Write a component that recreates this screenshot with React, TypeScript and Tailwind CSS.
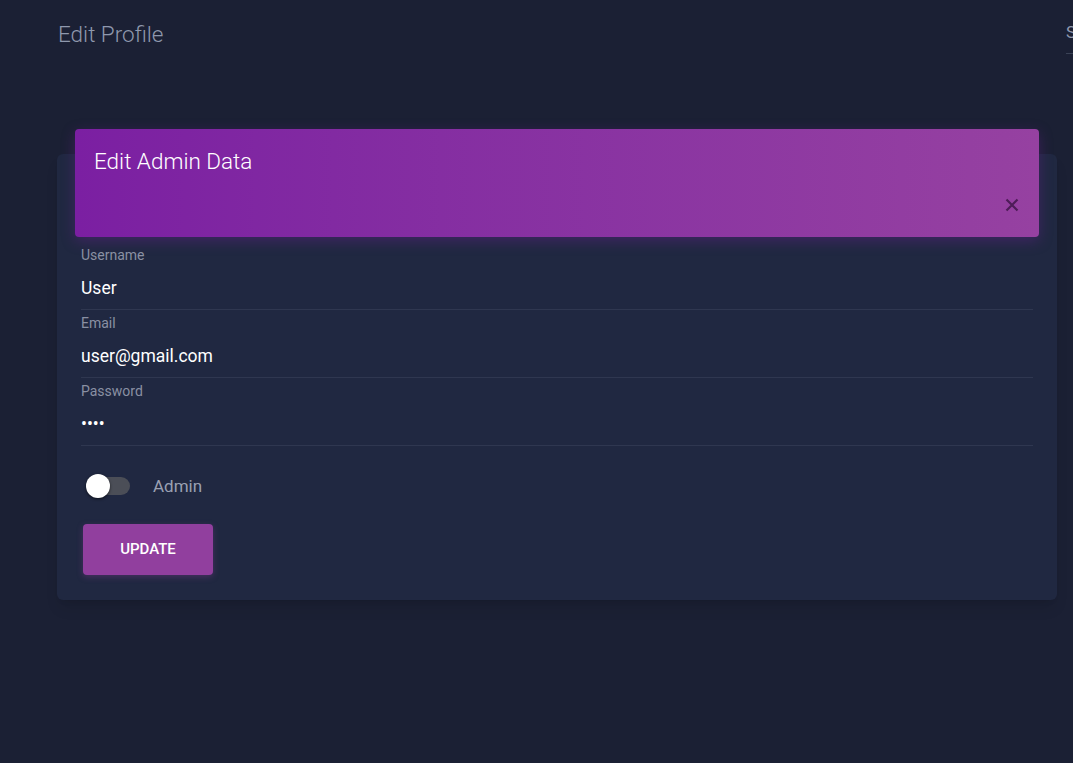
import { useState } from "react"

const fields = [
  { label: "Username", value: "User", type: "text" },
  { label: "Email", value: "user@gmail.com", type: "email" },
  { label: "Password", value: "1234", type: "password" },
]

export default function App() {
  const [isAdmin, setIsAdmin] = useState(false)

  return (
    <div className="min-h-[763px] w-full overflow-hidden bg-[#1b2034] font-['Roboto',sans-serif]">
      {/* Top bar */}
      <div className="flex items-start pl-[58px] pt-[18px]">
        <h2 className="text-[22.5px] font-light leading-8 text-[#8f98ad]">Edit Profile</h2>
        <div className="ml-auto w-[7px] overflow-hidden pt-[4px]">
          <span className="block whitespace-nowrap border-b border-[#3a4256] pb-[11px] text-[17px] leading-5 text-[#8f98ad]">
            Sign out
          </span>
        </div>
      </div>

      {/* Card */}
      <div className="ml-[57px] mt-[100px] flex w-[1000px] flex-col rounded-md bg-[#202841] px-6 pb-[25px] shadow-lg">
        <div className="-mx-[6px] -mt-[25px] flex h-[108px] flex-col rounded bg-linear-to-r from-[#7b1fa2] to-[#9641a1] px-[19px] pt-[16px] shadow-[0_4px_14px_rgba(123,31,162,0.35)]">
          <h4 className="text-[22.5px] font-light leading-8 text-white">Edit Admin Data</h4>
          <button className="ml-auto mt-auto mb-[25px] mr-[1px] text-[#4e1c58]">
            <svg width="14" height="14" viewBox="0 0 14 14" fill="none" stroke="currentColor" strokeWidth="2.2">
              <path d="M1.5 1.5l11 11M12.5 1.5l-11 11" />
            </svg>
          </button>
        </div>

        <form className="pt-[5px]">
          {fields.map((f) => (
            <div key={f.label} className="border-b border-[#2f3750] pt-[5px] pb-[9px]">
              <label className="block text-[14px] leading-4 text-[#8a90a3]">{f.label}</label>
              <input
                type={f.type}
                defaultValue={f.value}
                className="mt-[13px] block w-full bg-transparent text-[17.5px] leading-6 text-white outline-none"
              />
            </div>
          ))}

          {/* Admin switch */}
          <div className="mt-[28px] flex h-6 items-center">
            <button
              type="button"
              onClick={() => setIsAdmin(!isAdmin)}
              className="relative ml-[6px] h-[18px] w-[43px] rounded-full bg-[#4b4e57]"
            >
              <span
                className={`absolute top-1/2 h-[24px] w-[24px] -translate-y-1/2 rounded-full bg-white shadow-[0_1px_3px_rgba(0,0,0,0.6)] ${
                  isAdmin ? "left-[20px]" : "-left-[1px]"
                }`}
              />
            </button>
            <span className="ml-[23px] text-[17px] leading-6 text-[#9aa0b2]">Admin</span>
          </div>

          <button
            type="button"
            className="ml-[2px] mt-[26px] h-[51px] w-[130px] rounded bg-[#913f9e] text-[15px] font-medium text-white shadow-[0_2px_6px_rgba(145,63,158,0.35)]"
          >
            UPDATE
          </button>
        </form>
      </div>
    </div>
  )
}
